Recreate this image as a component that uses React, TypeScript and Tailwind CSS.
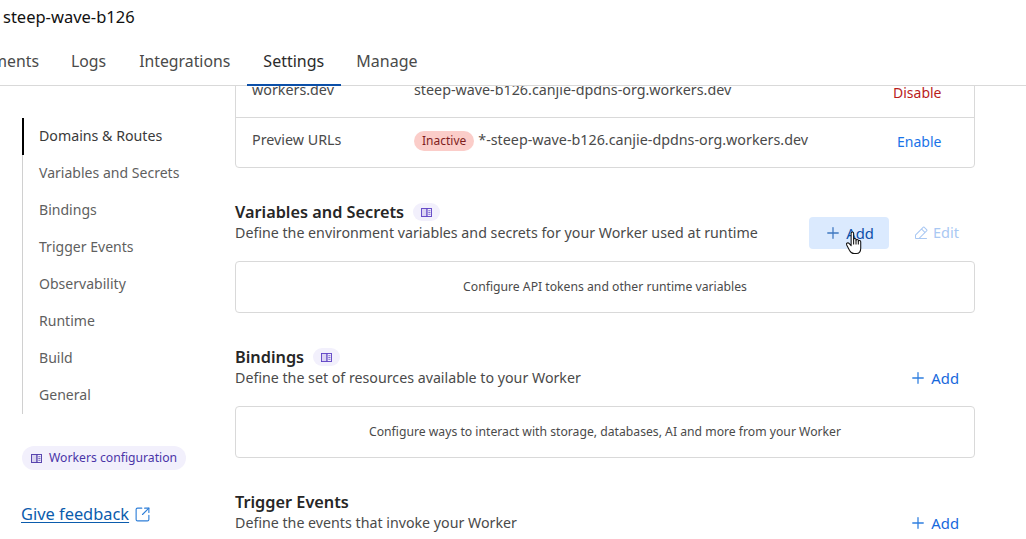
import { Plus, SquareArrowOutUpRight } from "lucide-react";
import { PiPencilSimpleLine } from "react-icons/pi";

function BookIcon({ className }: { className?: string }) {
  return (
    <svg viewBox="0 0 12 10" className={className} fill="none" stroke="currentColor" strokeWidth="1">
      <rect x="0.5" y="0.5" width="6" height="9" fill="currentColor" fillOpacity="0.15" stroke="none" />
      <rect x="0.5" y="0.5" width="11" height="9" />
      <path d="M6.5 0.5v9" strokeWidth="1.4" />
      <path d="M8 3h2.4M8 5h2.4M8 7h2.4" strokeWidth="0.8" />
    </svg>
  );
}

function HandCursor() {
  return (
    <svg viewBox="0 0 18 26" className="absolute left-[36px] top-[13px] h-[25px] w-[18px]" fill="#fff" stroke="#111" strokeWidth="1.1" strokeLinejoin="round">
      <path d="M6 13V3.4C6 1.6 8.6 1.6 8.6 3.4V10c0-1.6 2.5-1.6 2.5 0v1c0-1.5 2.4-1.5 2.4 0v1c0-1.4 2.5-1.4 2.5 .2V19c0 3-1.6 5.5-4.5 5.5H9c-2.5 0-3.6-1.4-4.6-3.2L1.4 15.6c-.9-1.8 1.3-3 2.5-1.6L6 16.4z" />
      <path d="M8.6 10v5M11.1 11v4M13.5 12v3" fill="none" />
    </svg>
  );
}

function DocBadge() {
  return (
    <span className="flex h-[18px] w-[27px] items-center justify-center rounded-full bg-[#f2f0fc] text-[#5b3fc4]">
      <BookIcon className="h-[9px] w-[11px]" />
    </span>
  );
}

function AddButton() {
  return (
    <button className="flex items-center gap-[4px] text-[14.8px] text-[#1668dc]">
      <Plus className="h-[18px] w-[18px] text-[#2f7fe0]" strokeWidth={1.7} />
      Add
    </button>
  );
}

function Section({ title, desc, note, badge, action }: { title: string; desc: string; note?: string; badge?: boolean; action: React.ReactNode }) {
  return (
    <section className="mb-[34px]">
      <div className="flex h-[41px] items-end justify-between">
        <div>
          <div className="flex h-[21px] items-center gap-[9px] pb-[1px]">
            <h2 className="text-[16.3px] font-semibold text-[#262626]">{title}</h2>
            {badge && <DocBadge />}
          </div>
          <p className="h-[20px] text-[14.22px] leading-[20px] text-[#4a4a4a]">{desc}</p>
        </div>
        {action}
      </div>
      {note && (
        <div className="mt-[18px] flex h-[52px] items-center justify-center rounded-[4px] border border-[#d9d9d9] text-[12.2px] text-[#4a4a4a]">
          {note}
        </div>
      )}
    </section>
  );
}

const navItems = ["Domains & Routes", "Variables and Secrets", "Bindings", "Trigger Events", "Observability", "Runtime", "Build", "General"];

export default function App() {
  return (
    <div className="flex h-[539px] w-[1026px] flex-col overflow-hidden bg-white font-['Noto_Sans','Liberation_Sans',sans-serif] text-[#4a4a4a]">
      <header className="h-[86px] shrink-0 border-b border-[#d9d9d9]">
        <h1 className="pl-[3px] pt-[6px] text-[16.5px] leading-[22px] text-[#111]">steep-wave-b126</h1>
        <nav className="ml-[-30px] mt-[22px] flex items-start text-[15.8px] leading-[22px]">
          <span className="w-[85px] px-[16px] pb-[12px] text-right">ments</span>
          <span className="pb-[12px] pl-[16px] pr-[17px]">Logs</span>
          <span className="pb-[12px] pl-[16px] pr-[17px]">Integrations</span>
          <span className="relative w-[94px] pb-[12px] pr-[1px] text-center text-[16px] text-[#2b2b2b]">
            Settings
            <span className="absolute inset-x-0 top-[34px] h-[2px] bg-[#0b4fa8]" />
          </span>
          <span className="pb-[12px] pl-[15px] pr-[16px] text-[16px]">Manage</span>
        </nav>
      </header>
      <div className="flex min-h-0 flex-1 overflow-hidden">
        <aside className="w-[235px] shrink-0 pl-[22px] pt-[32px]">
          <ul className="border-l border-[#d0d0d0]">
            {navItems.map((item, i) => (
              <li key={item} className={i === 0 ? "ml-[-1px] flex h-[37px] items-center border-l-2 border-black pb-[2px] pl-[15px] text-[14.2px] text-[#3a3a3a]" : "flex h-[37px] items-center pb-[2px] pl-[16px] text-[14.05px] text-[#5f5f5f]"}>
                {item}
              </li>
            ))}
          </ul>
          <div className="mt-[32px] flex h-[24px] w-[164px] items-center gap-[7px] rounded-full bg-[#f2f0fc] pl-[9px] text-[12.2px] text-[#4a35a8]">
            <BookIcon className="h-[9px] w-[11px]" />
            Workers configuration
          </div>
          <a className="ml-[-1px] mt-[33px] flex items-center gap-[5px] text-[16.4px] leading-[22px] text-[#0b5cad]">
            <span className="underline decoration-1 underline-offset-2">Give feedback</span>
            <SquareArrowOutUpRight className="h-[17px] w-[17px] text-[#2f7fd8]" strokeWidth={1.6} />
          </a>
        </aside>
        <main className="w-[740px] shrink-0">
          <div className="mb-[34px] mt-[-19px] rounded-[4px] border border-[#d9d9d9]">
            <div className="flex h-[50px] items-center border-b border-[#d9d9d9] pl-[16px] text-[14.3px]">
              <span className="w-[162px] pb-[5px]">workers.dev</span>
              <span className="flex-1 pb-[5px]">steep-wave-b126.canjie-dpdns-org.workers.dev</span>
              <span className="w-[81px] text-[14px] text-[#b91c1c]">Disable</span>
            </div>
            <div className="flex h-[49px] items-center pl-[16px] text-[14.3px]">
              <span className="w-[162px] pb-[6px]">Preview URLs</span>
              <span className="flex flex-1 items-center gap-[4px] pb-[3px]">
                <span className="rounded-full bg-[#fbcdc9] px-[8px] text-[12px] leading-[20px] text-[#7f1d1d]">Inactive</span>
                <span className="pb-[3px]">*-steep-wave-b126.canjie-dpdns-org.workers.dev</span>
              </span>
              <span className="w-[77px] pb-[3px] text-[14px] text-[#1a73e8]">Enable</span>
            </div>
          </div>
          <Section
            title="Variables and Secrets"
            badge
            desc="Define the environment variables and secrets for your Worker used at runtime"
            note="Configure API tokens and other runtime variables"
            action={
              <div className="mb-[-6px] flex items-center gap-[24px] pr-[16px]">
                <button className="relative flex h-[32px] w-[80px] items-center justify-center gap-[4px] rounded-[4px] bg-[#dbeafe] text-[14.8px] text-[#0b4fa8]">
                  <Plus className="h-[18px] w-[18px] text-[#3f78c0]" strokeWidth={1.7} />
                  Add
                  <HandCursor />
                </button>
                <span className="flex items-center gap-[4px] text-[14.5px] text-[#a9c8f3]">
                  <PiPencilSimpleLine className="h-[16px] w-[16px]" />
                  Edit
                </span>
              </div>
            }
          />
          <Section
            title="Bindings"
            badge
            desc="Define the set of resources available to your Worker"
            note="Configure ways to interact with storage, databases, AI and more from your Worker"
            action={<div className="mb-[-1px] pr-[16px]"><AddButton /></div>}
          />
          <Section
            title="Trigger Events"
            desc="Define the events that invoke your Worker"
            action={<div className="mb-[-1px] pr-[16px]"><AddButton /></div>}
          />
        </main>
      </div>
    </div>
  );
}
